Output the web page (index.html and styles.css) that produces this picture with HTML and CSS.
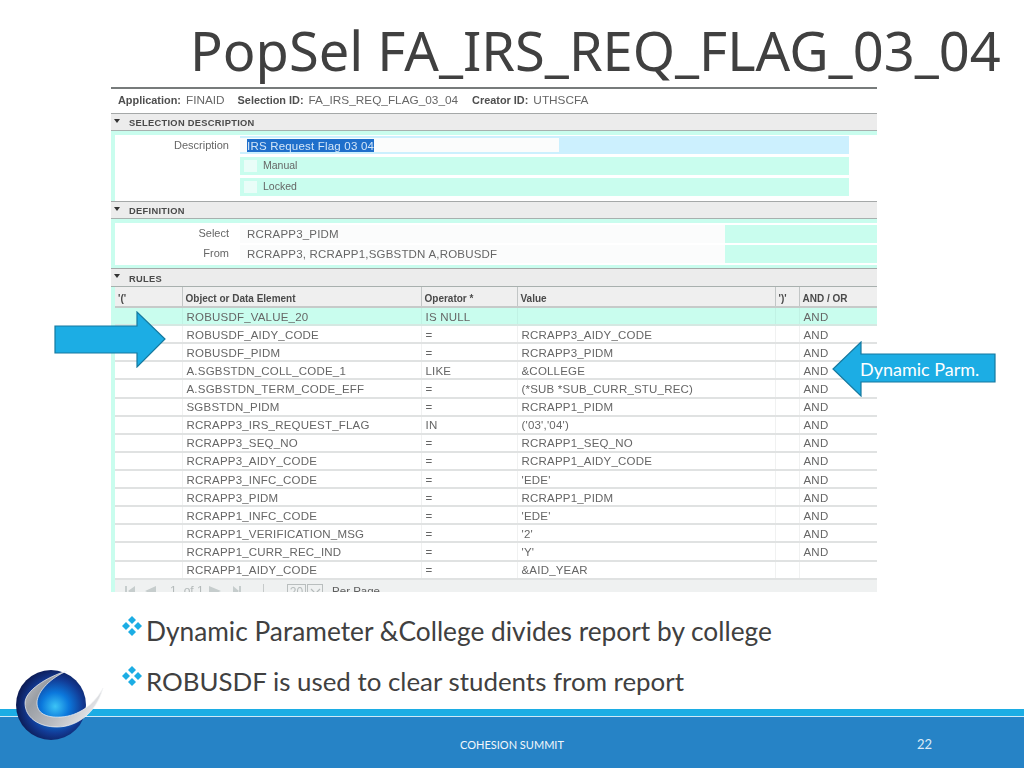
FILE: index.html
```html
<!DOCTYPE html>
<html lang="en">
<head>
    <title>PopSel FA_IRS_REQ_FLAG_03_04</title>
    <link rel="stylesheet" href="styles.css">
</head>
<body>
<div class="slide">
    <h1 class="slide_title">PopSel FA_IRS_REQ_FLAG_03_04</h1>

    <div class="shot">
        <div class="app_bar">
            <b>Application:</b><span class="app_val app_val1">FINAID</span>
            <b>Selection ID:</b><span class="app_val app_val2">FA_IRS_REQ_FLAG_03_04</span>
            <b>Creator ID:</b><span class="app_val">UTHSCFA</span>
        </div>

        <div class="section_head"><i class="caret"></i>SELECTION DESCRIPTION</div>
        <div class="panel panel_desc">
            <div class="label_col"><span>Description</span></div>
            <div class="field_col">
                <div class="field_row field_blue"><div class="input input_desc"><span class="selected">IRS Request Flag 03 04</span></div></div>
                <div class="field_row"><i class="check"></i><span class="field_label">Manual</span></div>
                <div class="field_row"><i class="check"></i><span class="field_label">Locked</span></div>
            </div>
        </div>

        <div class="section_head"><i class="caret"></i>DEFINITION</div>
        <div class="panel panel_def">
            <div class="label_col"><span>Select</span><span>From</span></div>
            <div class="field_col">
                <div class="field_row"><div class="input input_def">RCRAPP3_PIDM</div></div>
                <div class="field_row"><div class="input input_def">RCRAPP3, RCRAPP1,SGBSTDN A,ROBUSDF</div></div>
            </div>
        </div>

        <div class="section_head section_rules"><i class="caret"></i>RULES</div>
        <div class="rules_wrap">
            <table class="rules">
                <colgroup>
                    <col class="col_open"><col class="col_obj"><col class="col_op"><col class="col_val"><col class="col_close"><col>
                </colgroup>
                <thead>
                    <tr><th>'('</th><th>Object or Data Element</th><th>Operator *</th><th>Value</th><th>')'</th><th>AND / OR</th></tr>
                </thead>
                <tbody>
                    <tr class="current"><td></td><td>ROBUSDF_VALUE_20</td><td>IS NULL</td><td></td><td></td><td>AND</td></tr>
                    <tr><td></td><td>ROBUSDF_AIDY_CODE</td><td>=</td><td>RCRAPP3_AIDY_CODE</td><td></td><td>AND</td></tr>
                    <tr><td></td><td>ROBUSDF_PIDM</td><td>=</td><td>RCRAPP3_PIDM</td><td></td><td>AND</td></tr>
                    <tr><td></td><td>A.SGBSTDN_COLL_CODE_1</td><td>LIKE</td><td>&amp;COLLEGE</td><td></td><td>AND</td></tr>
                    <tr><td></td><td>A.SGBSTDN_TERM_CODE_EFF</td><td>=</td><td>(*SUB *SUB_CURR_STU_REC)</td><td></td><td>AND</td></tr>
                    <tr><td></td><td>SGBSTDN_PIDM</td><td>=</td><td>RCRAPP1_PIDM</td><td></td><td>AND</td></tr>
                    <tr><td></td><td>RCRAPP3_IRS_REQUEST_FLAG</td><td>IN</td><td>('03','04')</td><td></td><td>AND</td></tr>
                    <tr><td></td><td>RCRAPP3_SEQ_NO</td><td>=</td><td>RCRAPP1_SEQ_NO</td><td></td><td>AND</td></tr>
                    <tr><td></td><td>RCRAPP3_AIDY_CODE</td><td>=</td><td>RCRAPP1_AIDY_CODE</td><td></td><td>AND</td></tr>
                    <tr><td></td><td>RCRAPP3_INFC_CODE</td><td>=</td><td>'EDE'</td><td></td><td>AND</td></tr>
                    <tr><td></td><td>RCRAPP3_PIDM</td><td>=</td><td>RCRAPP1_PIDM</td><td></td><td>AND</td></tr>
                    <tr><td></td><td>RCRAPP1_INFC_CODE</td><td>=</td><td>'EDE'</td><td></td><td>AND</td></tr>
                    <tr><td></td><td>RCRAPP1_VERIFICATION_MSG</td><td>=</td><td>'2'</td><td></td><td>AND</td></tr>
                    <tr><td></td><td>RCRAPP1_CURR_REC_IND</td><td>=</td><td>'Y'</td><td></td><td>AND</td></tr>
                    <tr><td></td><td>RCRAPP1_AIDY_CODE</td><td>=</td><td>&amp;AID_YEAR</td><td></td><td></td></tr>
                </tbody>
            </table>
            <div class="pager">
                <svg class="pager_back" width="31" height="10" viewBox="0 0 31 10">
                    <path d="M0 0h2v10H0zM10 0v10L3 5zM31 0v10l-11-5z" fill="#c6cdcd"/>
                </svg>
                <span class="pager_num">1</span>
                <span class="pager_of">of 1</span>
                <svg class="pager_next" width="32" height="10" viewBox="0 0 32 10">
                    <path d="M0 0v10l12-5zM24 0v10l6-5zM30 0h2v10h-2z" fill="#c6cdcd"/>
                </svg>
                <span class="pager_sep"></span>
                <span class="pager_box">20</span>
                <span class="pager_drop">
                    <svg width="11" height="7" viewBox="0 0 11 7"><path d="M1 1l4.500 4.500L10 1" fill="none" stroke="#b4baba" stroke-width="1.200"/></svg>
                </span>
                <span class="pager_per">Per Page</span>
            </div>
        </div>
    </div>

    <ul class="bullets">
        <li>
            <svg class="diamonds" width="20" height="20" viewBox="0 0 20 20"><path d="M10 0l4 4-4 4-4-4zM4 6l4 4-4 4-4-4zM16 6l4 4-4 4-4-4zM10 12l4 4-4 4-4-4z" fill="#1cade4"/></svg>
            <span>Dynamic Parameter &amp;College divides report by college</span>
        </li>
        <li>
            <svg class="diamonds" width="20" height="20" viewBox="0 0 20 20"><path d="M10 0l4 4-4 4-4-4zM4 6l4 4-4 4-4-4zM16 6l4 4-4 4-4-4zM10 12l4 4-4 4-4-4z" fill="#1cade4"/></svg>
            <span class="bullet_narrow">ROBUSDF is used to clear students from report</span>
        </li>
    </ul>

    <div class="footer">
        <span class="footer_name">COHESION SUMMIT</span>
        <span class="footer_num">22</span>
    </div>

    <svg class="arrow_left" width="114" height="57" viewBox="0 0 114 57">
        <path d="M2 15H84V1L112 28 84 56V42H2Z" fill="#1cade4" stroke="#15799f" stroke-width="1.2"/>
    </svg>

    <div class="arrow_right">
        <svg width="164" height="56" viewBox="0 0 164 56">
            <path d="M163 13H29V1L1 28 29 55V41H163Z" fill="#1cade4" stroke="#15799f" stroke-width="1.2"/>
        </svg>
        <span class="arrow_text">Dynamic Parm.</span>
    </div>

    <svg class="logo" width="90" height="76" viewBox="0 0 90 76">
        <defs>
            <radialGradient id="ball" cx="0.56" cy="0.52" r="0.56">
                <stop offset="0" stop-color="#3cc4f6"/>
                <stop offset="0.35" stop-color="#0b78dc"/>
                <stop offset="0.7" stop-color="#123a94"/>
                <stop offset="1" stop-color="#0c1a52"/>
            </radialGradient>
            <linearGradient id="swoosh" x1="0" y1="0" x2="1" y2="0.5">
                <stop offset="0" stop-color="#c9ccd1"/>
                <stop offset="0.3" stop-color="#9a9ea4"/>
                <stop offset="0.65" stop-color="#b9bcc1"/>
                <stop offset="1" stop-color="#e4e5e8"/>
            </linearGradient>
        </defs>
        <circle cx="35" cy="36" r="35" fill="url(#ball)"/>
        <path d="M51 2C30 8 9 22 9 34 9 48 22 58 41 58 60 58 80 45 87 19 78 36 62 47 45 48 30 49 21 44 21 34 21 22 36 8 51 2Z" fill="url(#swoosh)" stroke="#f4f5f7" stroke-width=".7"/>
    </svg>
</div>
</body>
</html>
```

FILE: styles.css
```css
body {
    margin: 0;
    background: #ffffff;
}

.slide {
    position: relative;
    display: flex;
    flex-direction: column;
    width: 1024px;
    height: 768px;
    overflow: hidden;
    font-family: "Lato", "Liberation Sans", sans-serif;
    color: #404040;
}

.slide_title {
    flex: none;
    height: 87px;
    margin: 0;
    padding: 14px 0 0 190px;
    box-sizing: border-box;
    font-family: "Noto Sans", "Open Sans", sans-serif;
    font-size: 54.2px;
    font-weight: 400;
    line-height: 72px;
    white-space: nowrap;
}

/* The pasted screen capture */
.shot {
    flex: none;
    width: 766px;
    height: 505px;
    margin-left: 111px;
    overflow: hidden;
    border-top: 2px solid #777b7b;
    box-sizing: border-box;
    background: #ffffff;
    font-family: "Liberation Sans", sans-serif;
    font-size: 11.5px;
    color: #666666;
    filter: blur(0.5px);
}

.app_bar {
    display: flex;
    align-items: center;
    box-sizing: border-box;
    height: 24px;
    padding: 0 0 2px 7px;
    font-size: 10.9px;
    color: #4f4f4f;
}

.app_val {
    margin-left: 5px;
    font-size: 11.8px;
    color: #666666;
}

.app_val1 {
    margin-right: 13px;
}

.app_val2 {
    margin-right: 14px;
}

.section_head {
    display: flex;
    align-items: center;
    box-sizing: border-box;
    height: 18px;
    padding-top: 2px;
    border-top: 1px solid #a5a8a8;
    border-bottom: 1px solid #a8b0ae;
    background: #ececec;
    font-size: 9.3px;
    font-weight: bold;
    letter-spacing: 0.3px;
    color: #4a4a4a;
}

.section_rules {
    height: 19px;
}

.caret {
    width: 0;
    height: 0;
    margin: -5px 9px 0 3px;
    border-left: 3.5px solid transparent;
    border-right: 3.5px solid transparent;
    border-top: 4px solid #333333;
}

.panel {
    display: flex;
    box-sizing: border-box;
    border-left: 4px solid #c9fdee;
    border-top: 4px solid #c9fdee;
}

.panel_desc {
    height: 70px;
    padding-bottom: 3px;
}

.panel_def {
    height: 49px;
    padding-bottom: 3px;
    background: #c9fdee;
}

.label_col {
    display: flex;
    flex-direction: column;
    flex: 0 0 125px;
    box-sizing: border-box;
    padding-right: 11px;
    background: #ffffff;
    text-align: right;
    font-size: 11px;
    color: #666666;
}

.panel_desc .label_col {
    padding-top: 4px;
}

.panel_def .label_col span {
    height: 20px;
    line-height: 20px;
}

.field_col {
    display: flex;
    flex-direction: column;
    flex: 1;
    background: #ffffff;
}

.panel_desc .field_col {
    padding: 1px 28px 0 0;
    gap: 3px;
}

.panel_def .field_col {
    padding-top: 2px;
    gap: 2px;
}

.field_row {
    display: flex;
    align-items: center;
    height: 18px;
    background: #c9fdee;
    font-size: 10.5px;
    color: #666666;
}

.field_blue {
    background: #ccf0fe;
}

.field_label {
    padding-bottom: 2px;
}

.check {
    width: 13px;
    height: 12px;
    margin: 0 6px 0 4px;
    background: #e9fdf8;
}

.input {
    display: flex;
    align-items: center;
    height: 100%;
    box-sizing: border-box;
    padding-left: 7px;
    background: #fbfcfc;
    font-size: 11.5px;
    letter-spacing: 0.2px;
}

.input_desc {
    width: 319px;
    height: 14px;
}

.input_def {
    width: 485px;
}

.selected {
    padding-top: 1px;
    background: #1f6fcb;
    color: #d4e6f8;
}

/* Rules grid */
.rules_wrap {
    border-left: 4px solid #c9fdee;
}

.rules {
    width: 762px;
    border-collapse: collapse;
    table-layout: fixed;
}

.col_open {
    width: 67px;
}

.col_obj {
    width: 239px;
}

.col_op {
    width: 96px;
}

.col_val {
    width: 258px;
}

.col_close {
    width: 24px;
}

.rules th {
    height: 16px;
    padding: 3px 0 0 3px;
    border-left: 1px solid #c2c6c6;
    border-bottom: 2px solid #c6cac9;
    background: #efefef;
    text-align: left;
    font-size: 10px;
    color: #4a4a4a;
}

.rules td {
    height: 15.12px;
    padding: 1px 0 0 4px;
    border-left: 1px solid #f0f1f1;
    border-bottom: 2px solid #e0e2e2;
    white-space: nowrap;
    letter-spacing: 0.2px;
}

.rules th:first-child,
.rules td:first-child {
    border-left: none;
}

.rules .current td {
    background: #c9fdee;
    border-left-color: #c0f2e4;
    border-bottom-color: #d5e8e2;
}

.pager {
    display: flex;
    align-items: flex-start;
    height: 20px;
    padding: 4px 0 0 10px;
    background: #eff1f1;
    font-size: 12px;
    line-height: 14px;
    color: #b4baba;
}

.pager_back,
.pager_next {
    flex: none;
    margin-top: 2px;
}

.pager_num {
    margin-left: 14px;
}

.pager_of {
    margin-left: 7px;
}

.pager_next {
    margin-left: 5px;
}

.pager_sep {
    height: 12px;
    margin-left: 22px;
    border-left: 1px solid #c6caca;
}

.pager_box {
    margin-left: 23px;
    padding: 0 2px;
    border: 1px solid #b9bebe;
}

.pager_drop {
    display: flex;
    justify-content: center;
    align-items: center;
    width: 14px;
    height: 14px;
    margin-left: 1px;
    border: 1px solid #b9bebe;
}

.pager_per {
    margin-left: 9px;
    font-size: 11.5px;
    color: #5f5f5f;
}

/* Slide text below the capture */
.bullets {
    flex: 1;
    min-height: 0;
    margin: 0;
    padding: 19px 0 0 122px;
    list-style: none;
    font-size: 26.3px;
    line-height: 40px;
}

.bullets li {
    display: flex;
    align-items: center;
    height: 40px;
    margin-bottom: 10px;
    white-space: nowrap;
}

.bullet_narrow {
    font-size: 25.9px;
}

.diamonds {
    margin: -11px 4px 0 0;
}

.footer {
    display: flex;
    flex: none;
    align-items: center;
    justify-content: center;
    position: relative;
    height: 48px;
    padding-top: 4px;
    border-top: 7px solid #1cade4;
    box-shadow: inset 0 1px 0 #cfeaf7;
    background: #2683c6;
    font-size: 11px;
    color: #f2f7fb;
}

.footer_num {
    position: absolute;
    left: 917px;
    top: 20px;
    font-size: 13px;
    color: #dcebf6;
}

/* Shapes drawn on top of the slide */
.arrow_left {
    position: absolute;
    left: 53px;
    top: 311px;
}

.arrow_right {
    position: absolute;
    left: 832px;
    top: 341px;
}

.arrow_right svg {
    display: block;
}

.arrow_text {
    position: absolute;
    left: 28px;
    top: 16px;
    font-size: 18px;
    line-height: 24px;
    color: #ffffff;
    white-space: nowrap;
}

.logo {
    position: absolute;
    left: 16px;
    top: 669px;
}
```
